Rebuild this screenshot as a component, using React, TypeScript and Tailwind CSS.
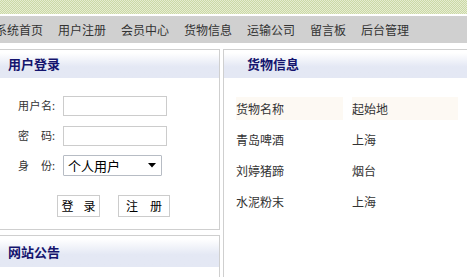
import React from 'react';

const navItems = ['系统首页', '用户注册', '会员中心', '货物信息', '运输公司', '留言板', '后台管理'];

const goods = [
  { name: '青岛啤酒', from: '上海' },
  { name: '刘婷猪蹄', from: '烟台' },
  { name: '水泥粉末', from: '上海' },
];

function PanelHeader({ title, className = '' }: { title: string; className?: string }) {
  return (
    <div
      className={`flex items-center bg-gradient-to-b from-white from-10% to-[#e4e8f4] to-60% text-[13px] font-bold text-[#14146e] ${className}`}
    >
      {title}
    </div>
  );
}

function Label({ chars }: { chars: string[] }) {
  return (
    <div className="flex items-center text-[11px] text-[#333]">
      <div className="flex w-[34px] justify-between">
        {chars.map((c) => (
          <span key={c}>{c}</span>
        ))}
      </div>
      <span className="w-[4px]">:</span>
    </div>
  );
}

export default function App() {
  return (
    <div
      className="relative h-[277px] w-[467px] overflow-hidden bg-white"
      style={{ fontFamily: '"Noto Sans CJK SC", "Noto Sans", sans-serif' }}
    >
      {/* top pattern band */}
      <div className="h-[14px] bg-[repeating-conic-gradient(#cbd9a6_0_25%,#e6edd1_0_50%)] bg-[length:2px_2px]" />
      <div className="mt-[2px] flex h-[27px] items-center bg-[#d0d0d0] text-[12px] text-[#333]">
        <div className="ml-[-5px] flex gap-[15px] whitespace-nowrap">
          {navItems.map((item) => (
            <span key={item}>{item}</span>
          ))}
        </div>
      </div>

      <div className="mt-[6px] flex">
        {/* left column */}
        <div className="ml-[-10px] flex w-[230px] flex-col gap-[5px]">
          <div className="h-[181px] border border-[#cfcfcf]">
            <PanelHeader title="用户登录" className="h-[28px] pl-[17px]" />
            <div className="flex flex-col pl-[27px] pt-[17px]">
              <div className="flex h-[21px] items-center gap-[7px]">
                <Label chars={['用', '户', '名']} />
                <div className="h-[20px] w-[104px] border border-[#cccccc] bg-white" />
              </div>
              <div className="mt-[9px] flex h-[21px] items-center gap-[7px]">
                <Label chars={['密', '码']} />
                <div className="h-[20px] w-[104px] border border-[#cccccc] bg-white" />
              </div>
              <div className="mt-[9px] flex h-[21px] items-center gap-[7px]">
                <Label chars={['身', '份']} />
                <div className="flex h-[21px] w-[99px] items-center justify-between rounded-[1px] border border-[#b7bcc4] bg-white pl-[4px] pr-[4px] text-[13px] text-black">
                  <span>个人用户</span>
                  <svg width="8" height="5" viewBox="0 0 8 5" className="mr-[1px]">
                    <path d="M0 0h8L4 4.5z" fill="#000" />
                  </svg>
                </div>
              </div>
              <div className="ml-[39px] mt-[19px] flex gap-[18px] whitespace-nowrap text-[12px] text-black">
                <div className="flex h-[22px] w-[43px] items-center justify-center gap-[10px] border border-[#cccccc] bg-white">
                  <span>登</span>
                  <span>录</span>
                </div>
                <div className="flex h-[22px] w-[52px] items-center justify-center gap-[12px] border border-[#cccccc] bg-white">
                  <span>注</span>
                  <span>册</span>
                </div>
              </div>
            </div>
          </div>
          <div className="h-[60px] border border-[#cfcfcf]">
            <PanelHeader title="网站公告" className="h-[31px] pl-[17px]" />
          </div>
        </div>

        {/* right column */}
        <div className="ml-[3px] h-[240px] flex-1 border border-r-0 border-[#cfcfcf]">
          <PanelHeader title="货物信息" className="h-[28px] pl-[23px]" />
          <div className="pl-[12px] pt-[19px] text-[12px] text-[#333]">
            <div className="flex h-[23px] gap-[9px]">
              <div className="flex w-[107px] items-center bg-[#fdf9f3]">货物名称</div>
              <div className="flex w-[106px] items-center bg-[#fdf9f3]">起始地</div>
            </div>
            {goods.map((g) => (
              <div key={g.name} className="mt-[8px] flex h-[23px] gap-[9px]">
                <div className="flex w-[107px] items-center">{g.name}</div>
                <div className="flex w-[106px] items-center">{g.from}</div>
              </div>
            ))}
          </div>
        </div>
      </div>
    </div>
  );
}
